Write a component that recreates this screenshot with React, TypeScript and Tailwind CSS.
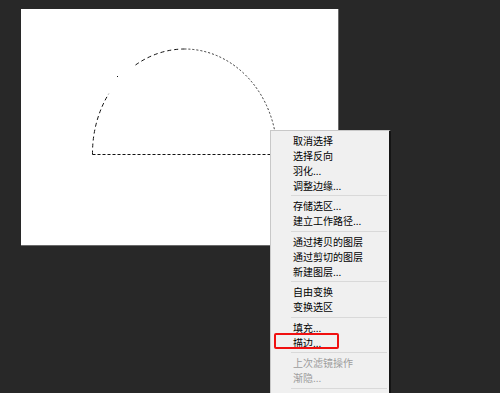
const items: (string | null | { label: string; disabled?: boolean; marked?: boolean })[] = [
  '取消选择',
  '选择反向',
  '羽化...',
  '调整边缘...',
  null,
  '存储选区...',
  '建立工作路径...',
  null,
  '通过拷贝的图层',
  '通过剪切的图层',
  '新建图层...',
  null,
  '自由变换',
  '变换选区',
  null,
  '填充...',
  { label: '描边...', marked: true },
  null,
  { label: '上次滤镜操作', disabled: true },
  { label: '渐隐...', disabled: true },
  null,
  '',
];

function Selection() {
  return (
    <svg width="317" height="237" className="absolute left-0 top-0">
      <g fill="none" stroke="#111" strokeWidth="1">
        <path d="M71.5 145.5 A92.5 105 0 0 1 87.7 84.8" strokeDasharray="4 3" />
        <path d="M114.5 56 A92.5 105 0 0 1 163.5 40" strokeDasharray="4 3" />
        <path d="M163.5 40 A92.5 105 0 0 1 256 145.5" strokeDasharray="2 2" stroke="#333" />
        <path d="M71.5 145.5 L256 145.5" strokeDasharray="3 2" />
      </g>
      <rect x="96" y="67" width="1" height="1" fill="#111" />
    </svg>
  );
}

export default function App() {
  return (
    <div className="relative w-[500px] h-[393px] overflow-hidden bg-[#282828] pt-[9px] pl-[21px]">
      <div className="relative w-[318px] h-[237px] bg-white border-r border-b border-[#6a6a6a]">
        <Selection />
      </div>

      <div
        className="absolute left-[270px] top-[130px] w-[121px] h-[280px] bg-[#f0f0f0] border-l border-t border-[#c8c8c8] border-r-2 border-r-[#141414] pt-[2px]"
        style={{ fontFamily: '"Noto Sans CJK SC", "Noto Sans", sans-serif' }}
      >
        {items.map((it, i) => {
          if (it === null) {
            return (
              <div key={i} className="h-[5.5px] flex items-center pl-[20px] pr-[2px]">
                <div className="w-full h-px bg-[#d9d9d9]" />
              </div>
            );
          }
          const label = typeof it === 'string' ? it : it.label;
          const disabled = typeof it === 'object' && it.disabled;
          const marked = typeof it === 'object' && it.marked;
          return (
            <div
              key={i}
              className={`relative h-[15px] flex items-center pl-[22px] text-[10px] leading-none ${
                disabled ? 'text-[#9c9c9c]' : 'text-black'
              }`}
            >
              {label}
              {marked && (
                <div className="absolute left-[3px] top-[-2px] w-[65px] h-[16px] border-2 border-[#f01010] rounded-[2px]" />
              )}
            </div>
          );
        })}
      </div>
    </div>
  );
}
